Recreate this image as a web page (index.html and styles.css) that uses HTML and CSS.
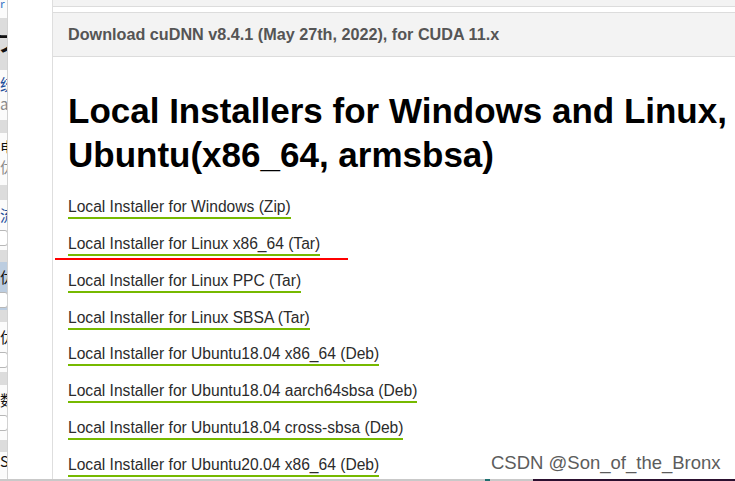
FILE: index.html
```html
<!DOCTYPE html>
<html lang="zh-CN">
<head>
    <meta charset="UTF-8">
    <title>cuDNN Archive</title>
    <link rel="stylesheet" href="styles.css">
</head>
<body>
    <div class="screen">
        <div class="window-row">
            <!-- edge of the window behind, mostly cut off -->
            <aside class="side-app">
                <div class="band white h8 blue-txt"><span>r</span></div>
                <div class="band white h10"></div>
                <div class="band grey h52 big-txt"><span>フ</span></div>
                <div class="band white h50 two-lines"><span class="blue">统</span><span class="muted">a</span></div>
                <div class="band grey h13"></div>
                <div class="band white h52 two-lines"><span>电</span><span class="muted">优</span></div>
                <div class="band grey h15"></div>
                <div class="band white h50 with-box"><span class="blue">流</span><i class="box"></i></div>
                <div class="band grey h12"></div>
                <div class="band selected h48 with-box"><span>优</span><i class="box"></i></div>
                <div class="band grey h12"></div>
                <div class="band white h50 with-box"><span>优</span><i class="box"></i></div>
                <div class="band grey h13"></div>
                <div class="band white h55 with-box"><span>数</span><i class="box"></i></div>
                <div class="band grey h12"></div>
                <div class="band white h26"><span>S</span></div>
            </aside>

            <div class="gutter"></div>

            <main class="page">
                <div class="prev-release"></div>

                <section class="release">
                    <div class="release-header">Download cuDNN v8.4.1 (May 27th, 2022), for CUDA 11.x</div>

                    <div class="release-body">
                        <h1>Local Installers for Windows and Linux, Ubuntu(x86_64, armsbsa)</h1>

                        <ul class="installers">
                            <li><a href="#">Local Installer for Windows (Zip)</a></li>
                            <li><a href="#">Local Installer for Linux x86_64 (Tar)</a></li>
                            <li><a href="#">Local Installer for Linux PPC (Tar)</a></li>
                            <li><a href="#">Local Installer for Linux SBSA (Tar)</a></li>
                            <li><a href="#">Local Installer for Ubuntu18.04 x86_64 (Deb)</a></li>
                            <li><a href="#">Local Installer for Ubuntu18.04 aarch64sbsa (Deb)</a></li>
                            <li><a href="#">Local Installer for Ubuntu18.04 cross-sbsa (Deb)</a></li>
                            <li><a href="#">Local Installer for Ubuntu20.04 x86_64 (Deb)</a></li>
                        </ul>
                    </div>
                </section>
            </main>
        </div>
        <div class="taskbar-edge"></div>

        <!-- annotation drawn over the screenshot -->
        <div class="red-mark"></div>
        <div class="watermark">CSDN @Son_of_the_Bronx</div>
    </div>
</body>
</html>
```

FILE: styles.css
```css
/* Base */
body {
    margin: 0;
    font-family: 'Liberation Sans', Arial, sans-serif;
    background: #fff;
}

.screen {
    position: relative;
    width: 735px;
    height: 481px;
    overflow: hidden;
    display: flex;
    flex-direction: column;
}

.window-row {
    display: flex;
    flex: 1;
    min-height: 0;
}

/* Window behind (left edge) */
.side-app {
    width: 7px;
    border-right: 1px solid #d2d2d2;
    display: flex;
    flex-direction: column;
    overflow: hidden;
    font-family: 'Noto Sans CJK SC', 'Liberation Sans', sans-serif;
    font-size: 15px;
    color: #111;
}

.band {
    position: relative;
    overflow: hidden;
    flex: none;
}

.band span {
    display: block;
    line-height: 18px;
    white-space: nowrap;
}

.band.white { background: #fbfbfb; }
.band.grey { background: #dcdcdc; }
.band.selected { background: #bccde0; }

.h8 { height: 8px; }
.h10 { height: 10px; }
.h12 { height: 12px; }
.h13 { height: 13px; }
.h15 { height: 15px; }
.h26 { height: 26px; }
.h48 { height: 48px; }
.h50 { height: 50px; }
.h52 { height: 52px; }
.h55 { height: 55px; }

.blue-txt span {
    color: #3b78c8;
    line-height: 8px;
    font-size: 12px;
}

.big-txt span {
    font-size: 22px;
    font-weight: bold;
    line-height: 22px;
    margin-top: 12px;
    margin-left: -4px;
}

.two-lines span {
    line-height: 20px;
}

.two-lines span:first-child {
    margin-top: 4px;
}

.blue { color: #1d4f9c; }
.muted { color: #8a8a8a; }

.with-box span {
    margin-top: 6px;
}

.box {
    display: block;
    margin-top: 6px;
    width: 10px;
    height: 14px;
    margin-left: -4px;
    border: 1px solid #b8b8b8;
    border-radius: 3px;
    background: #fff;
}

.gutter {
    width: 44px;
    background: #fff;
}

/* Page */
.page {
    flex: 1;
    min-width: 0;
    border-left: 1px solid #dedede;
    overflow: hidden;
}

.prev-release {
    height: 6px;
    background: #f3f3f3;
    border-bottom: 1px solid #dcdcdc;
}

.release {
    margin-top: 5px;
}

.release-header {
    height: 43px;
    display: flex;
    align-items: center;
    padding-left: 15px;
    background: #f3f3f3;
    border-top: 1px solid #dcdcdc;
    border-bottom: 1px solid #dcdcdc;
    font-size: 16.2px;
    font-weight: bold;
    color: #555;
    white-space: nowrap;
}

.release-body {
    padding: 0 15px;
}

h1 {
    margin: 32px 0 20px;
    width: 700px;
    font-size: 35px;
    line-height: 44px;
    font-weight: bold;
    color: #000;
}

.installers {
    list-style: none;
    margin: 0;
    padding: 0;
}

.installers li {
    margin-bottom: 14.86px;
}

.installers a {
    display: inline-block;
    font-size: 15.6px;
    line-height: 20px;
    color: #2b2b2b;
    text-decoration: none;
    border-bottom: 2px solid #76b900;
    white-space: nowrap;
}

/* Screen bottom */
.taskbar-edge {
    height: 2px;
    flex: none;
    background: linear-gradient(to right, #c9c9c9 0, #c9c9c9 485px, #1f6f70 485px, #1f6f70 490px, #c9c9c9 490px, #c9c9c9 533px, #2c1030 533px);
}

/* Overlays */
.red-mark {
    position: absolute;
    left: 55px;
    top: 258px;
    width: 293px;
    height: 2px;
    background: #f00;
}

.watermark {
    position: absolute;
    left: 491px;
    top: 452px;
    font-size: 18.5px;
    line-height: 22px;
    color: #5c5c5c;
    white-space: nowrap;
}
```
